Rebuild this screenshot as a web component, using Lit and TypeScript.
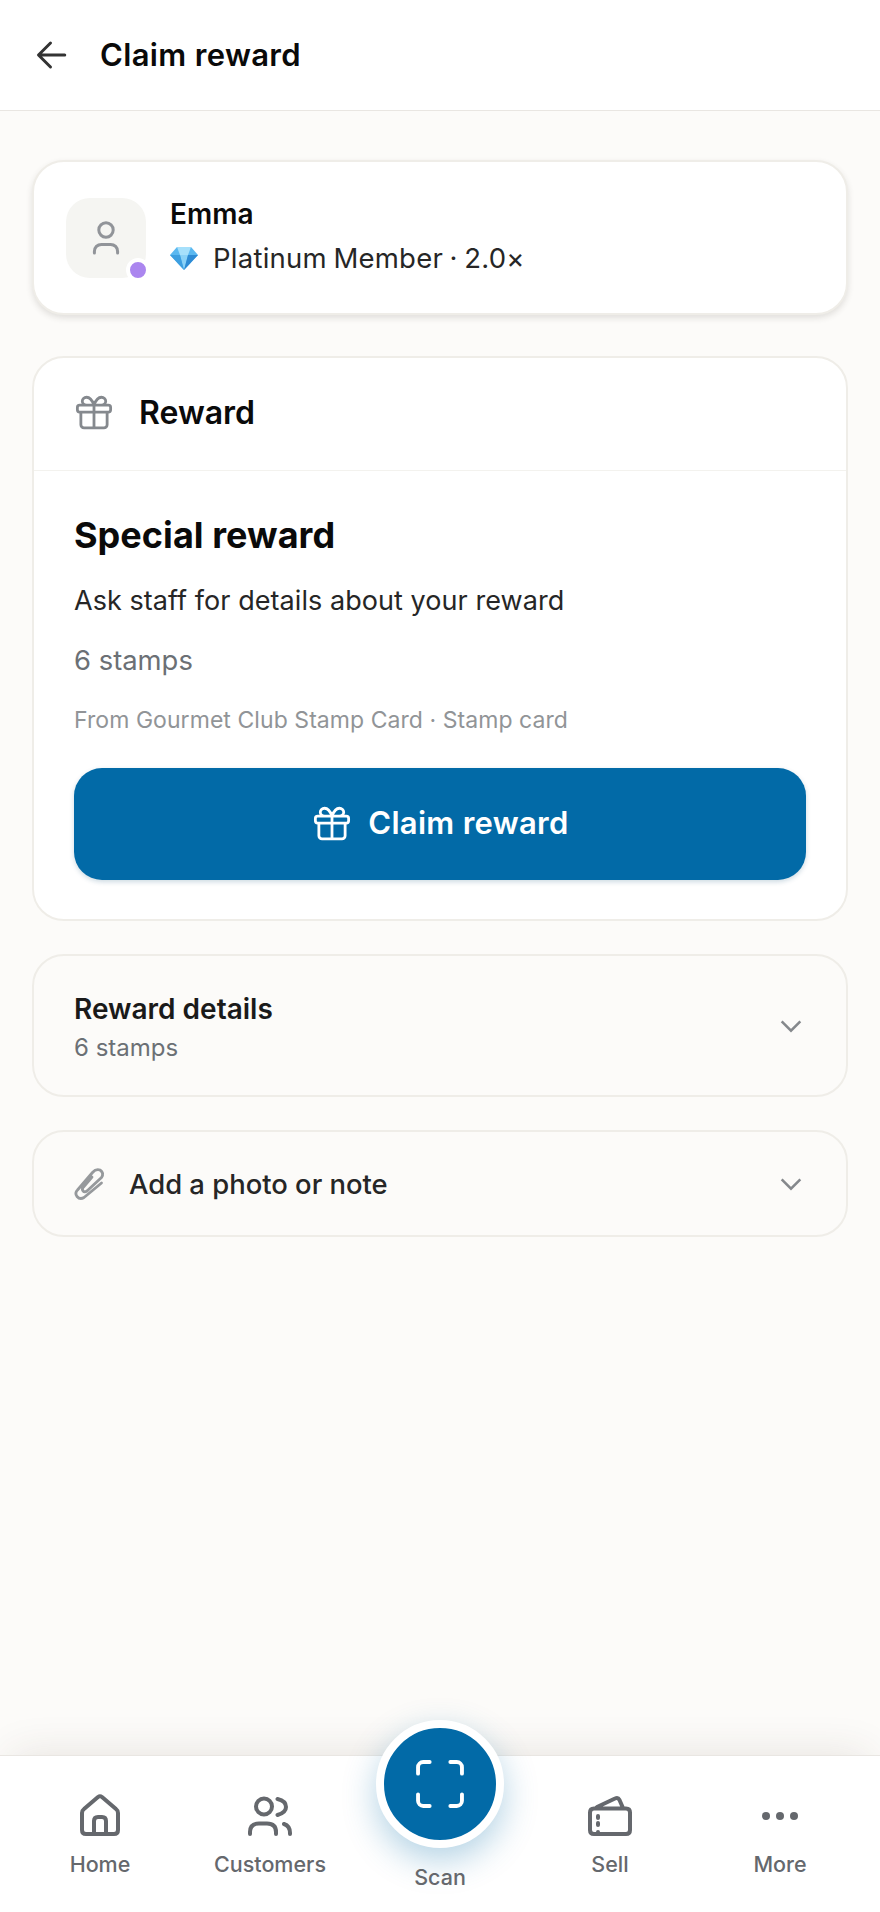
import { LitElement, html, css, svg } from 'lit';
import { customElement } from 'lit/decorators.js';

const gift = svg`<path d="M4.500 11.500v7.200c0 1 .8 1.800 1.800 1.800h11.400c1 0 1.800-.8 1.800-1.800v-7.200M12 7.500v13M3.800 7.500h16.400c.7 0 1.300.6 1.300 1.300v1.400c0 .7-.6 1.300-1.300 1.300H3.800c-.7 0-1.300-.6-1.300-1.300V8.800c0-.7.6-1.300 1.300-1.300zM12 7.500C11 4.800 9.700 3 7.800 3 6.300 3 5.300 4.100 5.300 5.300c0 1.300 1.100 2.200 2.500 2.200M12 7.500C13 4.800 14.300 3 16.200 3c1.500 0 2.500 1.100 2.500 2.300 0 1.300-1.100 2.200-2.500 2.200"/>`;

const chevron = html`<svg class="chev" viewBox="0 0 24 24"><path d="M4 8l8 8 8-8"/></svg>`;

// nav icons are drawn on a 60 unit box, one unit is one pixel
const navItems = [
  {
    label: 'Home',
    icon: svg`<path d="M12 27Q12 24.500 14 23L28 11Q30 9.500 32 11L46 23Q48 24.500 48 27V44Q48 48 44 48H16Q12 48 12 44ZM24 48V35Q24 31 28 31H32Q36 31 36 35V48"/>`,
  },
  {
    label: 'Customers',
    icon: svg`<circle cx="24" cy="20.500" r="8"/><path d="M10 48V46Q10 37.500 19 37.500H27Q36 37.500 36 46V48M37.500 13Q46 15 46 21Q46 26.500 37.500 29M44 38Q50 40 50 47V48"/>`,
  },
  {
    label: 'Sell',
    icon: svg`<path d="M14 22.500H46Q50 22.500 50 26.500V44Q50 48 46 48H14Q10 48 10 44V26.500Q10 22.500 14 22.500ZM17 21L35 12.500Q38 11 39.500 14L43 22M18 30V32M18 37V39M18 46V47"/>`,
  },
  {
    label: 'More',
    icon: svg`<circle cx="16" cy="30" r="4" class="dot"/><circle cx="30" cy="30" r="4" class="dot"/><circle cx="44" cy="30" r="4" class="dot"/>`,
  },
];

@customElement('app-root')
export class AppRoot extends LitElement {
  static styles = css`
    :host {
      display: flex;
      flex-direction: column;
      height: 1912px;
      background: #fcfbf9;
      font-family: Inter, 'Liberation Sans', sans-serif;
      color: #0a0a0a;
      overflow: hidden;
    }

    svg {
      fill: none;
      stroke: currentColor;
      stroke-linecap: round;
      stroke-linejoin: round;
      display: block;
      flex: none;
    }

    .topbar {
      height: 110px;
      display: flex;
      align-items: center;
      gap: 30px;
      padding: 0 34px;
      background: #fff;
      border-bottom: 1px solid #e9e6e2;
      flex: none;
    }
    .topbar svg {
      width: 36px;
      height: 36px;
      stroke-width: 2;
      color: #333;
    }
    .topbar h1 {
      margin: 0 0 2px;
      font-size: 31px;
      font-weight: 600;
      letter-spacing: 0.35px;
    }

    main {
      flex: 1;
      padding: 49px 32px 0;
      display: flex;
      flex-direction: column;
    }

    .card {
      border: 2px solid #efede8;
      border-radius: 32px;
    }

    .member {
      height: 155px;
      box-sizing: border-box;
      margin-bottom: 41px;
      display: flex;
      align-items: center;
      gap: 24px;
      padding: 0 32px;
      background: #fff;
      box-shadow: 0 3px 6px rgba(60, 50, 40, 0.14);
    }
    .avatar {
      position: relative;
      width: 80px;
      height: 80px;
      border-radius: 24px;
      background: #f5f5f2;
      color: #919499;
      display: flex;
      align-items: center;
      justify-content: center;
    }
    .avatar svg {
      width: 48px;
      height: 48px;
      stroke-width: 1.500;
    }
    .presence {
      position: absolute;
      right: -4px;
      bottom: -4px;
      width: 16px;
      height: 16px;
      border-radius: 50%;
      background: #ab86ef;
      border: 4px solid #fff;
    }
    .who {
      margin-top: -3px;
    }
    .name {
      font-size: 28px;
      font-weight: 600;
      line-height: 34px;
    }
    .tier {
      display: flex;
      align-items: center;
      gap: 15px;
      margin-top: 10px;
      font-size: 27.500px;
      line-height: 34px;
      letter-spacing: 0.25px;
      word-spacing: -1.500px;
      color: #262626;
    }
    .tier svg {
      width: 28px;
      height: 24px;
      stroke: none;
    }

    .reward {
      height: 565px;
      box-sizing: border-box;
      background: #fff;
      margin-bottom: 33px;
    }
    .reward-head {
      height: 113px;
      box-sizing: border-box;
      padding: 0 39px 3px;
      display: flex;
      align-items: center;
      gap: 24px;
      border-bottom: 1px solid #f3f2ee;
      font-size: 32px;
      font-weight: 600;
    }
    .reward-head svg {
      width: 42px;
      height: 42px;
      stroke-width: 1.600;
      color: #85898e;
    }
    .reward-body {
      padding: 0 40px;
      display: flex;
      flex-direction: column;
    }
    .reward-body h2 {
      margin: 41px 0 0;
      font-size: 36px;
      font-weight: 700;
      line-height: 46px;
      letter-spacing: 0.05px;
    }
    .desc {
      margin-top: 25px;
      font-size: 27px;
      line-height: 36px;
      letter-spacing: 0.06px;
      color: #262626;
    }
    .stamps {
      margin-top: 23px;
      font-size: 27.400px;
      line-height: 36px;
      color: #6b7075;
    }
    .source {
      margin-top: 26px;
      font-size: 23px;
      line-height: 32px;
      letter-spacing: 0.06px;
      color: #919497;
    }
    .claim {
      margin-top: 32px;
      height: 112px;
      padding: 0 0 3px;
      border: none;
      border-radius: 28px;
      background: #026aa7;
      color: #fff;
      font: inherit;
      font-size: 31px;
      font-weight: 600;
      letter-spacing: 0.3px;
      display: flex;
      align-items: center;
      justify-content: center;
      gap: 15px;
      box-shadow: 0 2px 5px rgba(2, 70, 110, 0.2);
    }
    .claim svg {
      width: 42px;
      height: 42px;
      stroke-width: 1.600;
      margin-top: 3px;
    }

    .details {
      height: 143px;
      box-sizing: border-box;
      margin-bottom: 33px;
      display: flex;
      align-items: center;
      justify-content: space-between;
      padding: 0 41px 0 40px;
    }
    .details b {
      display: block;
      font-size: 28px;
      font-weight: 600;
      line-height: 36px;
      color: #1a1a1a;
    }
    .details span {
      display: block;
      margin-top: 6px;
      font-size: 24px;
      line-height: 30px;
      color: #6b7075;
    }
    .details > div {
      padding-top: 2px;
    }
    .chev {
      width: 28px;
      height: 28px;
      stroke-width: 2.200;
      color: #85888c;
      stroke-linecap: butt;
      stroke-linejoin: miter;
    }

    .attach {
      height: 107px;
      box-sizing: border-box;
      display: flex;
      align-items: center;
      gap: 21px;
      padding: 1px 41px 0 34px;
      font-size: 27.400px;
      font-weight: 450;
      color: #262626;
    }
    .attach span {
      flex: 1;
    }
    .attach .clip {
      width: 40px;
      height: 46px;
      stroke-width: 2.800;
      color: #96999c;
    }

    .nav {
      position: relative;
      flex: none;
      height: 157px;
      box-sizing: border-box;
      padding: 0 15px;
      display: grid;
      grid-template-columns: repeat(5, 1fr);
      background: #fff;
      border-top: 1px solid #e9e6e2;
      box-shadow: 0 -12px 40px -12px rgba(70, 50, 30, 0.12);
    }
    .tab {
      display: flex;
      flex-direction: column;
      align-items: center;
      padding-top: 30px;
      font-size: 21.500px;
      font-weight: 450;
      line-height: 28px;
      color: #65686d;
    }
    .tab svg {
      width: 60px;
      height: 60px;
      stroke-width: 4;
      margin-bottom: 4px;
    }
    .tab svg .dot {
      fill: currentColor;
      stroke: none;
    }
    .scan {
      display: flex;
      flex-direction: column;
      align-items: center;
      font-size: 21.500px;
      font-weight: 450;
      line-height: 28px;
      color: #65686d;
    }
    .fab {
      width: 112px;
      height: 112px;
      margin-top: -36px;
      margin-bottom: 15px;
      border-radius: 50%;
      background: #026aa7;
      border: 8px solid #fff;
      box-sizing: content-box;
      color: #fff;
      display: flex;
      align-items: center;
      justify-content: center;
      box-shadow: 0 12px 34px rgba(2, 106, 167, 0.3);
    }
    .fab svg {
      width: 62px;
      height: 62px;
      stroke-width: 1.500;
    }
  `;

  render() {
    return html`
      <header class="topbar">
        <svg viewBox="0 0 24 24"><path d="M20.500 12h-17M11 4l-8 8 8 8"/></svg>
        <h1>Claim reward</h1>
      </header>

      <main>
        <section class="card member">
          <div class="avatar">
            <svg viewBox="0 0 24 24"><circle cx="12" cy="8" r="3.600"/><path d="M6.200 19.500v-.8c0-2 1.500-3.500 3.500-3.500h4.600c2 0 3.500 1.500 3.500 3.500v.8"/></svg>
            <span class="presence"></span>
          </div>
          <div class="who">
            <div class="name">Emma</div>
            <div class="tier">
              <svg viewBox="0 0 28 24">
                <path d="M7 1h14l7 8-14 15L0 9z" fill="#5ab8f0"/>
                <path d="M7 1h14l-3 8H10z" fill="#a6e0fb"/>
                <path d="M10 9h8l-4 15z" fill="#8ad2f7"/>
                <path d="M0 9h10l4 15z" fill="#3d9fe0"/>
                <path d="M28 9H18l-4 15z" fill="#2e8bd4"/>
              </svg>
              <span>Platinum Member · 2.0×</span>
            </div>
          </div>
        </section>

        <section class="card reward">
          <div class="reward-head">
            <svg viewBox="0 0 24 24">${gift}</svg>
            Reward
          </div>
          <div class="reward-body">
            <h2>Special reward</h2>
            <div class="desc">Ask staff for details about your reward</div>
            <div class="stamps">6 stamps</div>
            <div class="source">From Gourmet Club Stamp Card · Stamp card</div>
            <button class="claim">
              <svg viewBox="0 0 24 24">${gift}</svg>
              Claim reward
            </button>
          </div>
        </section>

        <section class="card details">
          <div>
            <b>Reward details</b>
            <span>6 stamps</span>
          </div>
          ${chevron}
        </section>

        <section class="card attach">
          <svg class="clip" viewBox="0 0 40 46"><path d="M33.500 22L16 36.500Q12 39 9 35.500Q6.500 32 9.500 29L24.500 11.500Q28 7.500 32 9Q36.500 12 33.500 16.500L19 30Q16.500 31.500 15 30Q13.500 28 15.500 26L24 16"/></svg>
          <span>Add a photo or note</span>
          ${chevron}
        </section>
      </main>

      <nav class="nav">
        ${navItems.slice(0, 2).map(this.renderTab)}
        <div class="scan">
          <div class="fab">
            <svg viewBox="0 0 24 24"><path d="M3.500 8V5.500c0-1.100.9-2 2-2H8M16 3.500h2.500c1.100 0 2 .9 2 2V8M20.500 16v2.500c0 1.100-.9 2-2 2H16M8 20.500H5.500c-1.100 0-2-.9-2-2V16"/></svg>
          </div>
          Scan
        </div>
        ${navItems.slice(2).map(this.renderTab)}
      </nav>
    `;
  }

  private renderTab(item: { label: string; icon: unknown }) {
    return html`<div class="tab"><svg viewBox="0 0 60 60">${item.icon}</svg>${item.label}</div>`;
  }
}
